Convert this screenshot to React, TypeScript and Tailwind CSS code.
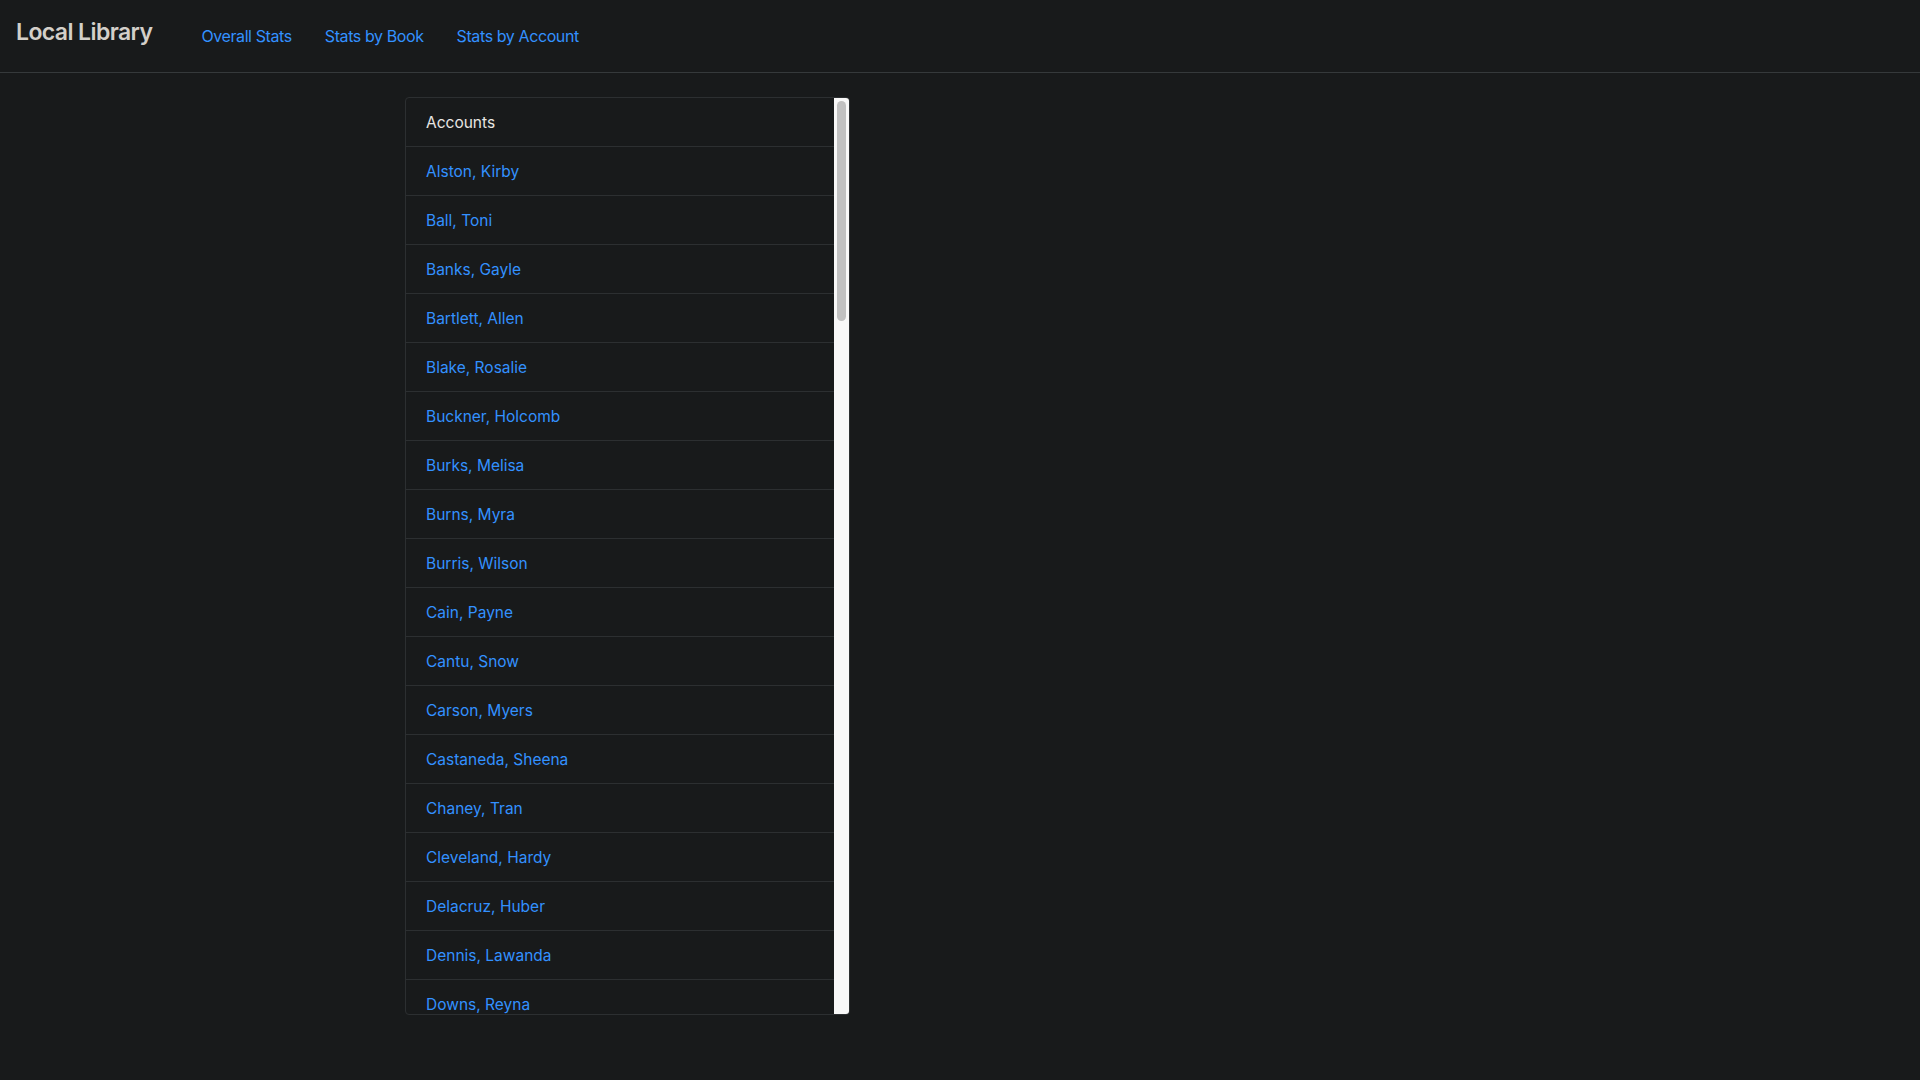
const accounts = [
  "Alston, Kirby",
  "Ball, Toni",
  "Banks, Gayle",
  "Bartlett, Allen",
  "Blake, Rosalie",
  "Buckner, Holcomb",
  "Burks, Melisa",
  "Burns, Myra",
  "Burris, Wilson",
  "Cain, Payne",
  "Cantu, Snow",
  "Carson, Myers",
  "Castaneda, Sheena",
  "Chaney, Tran",
  "Cleveland, Hardy",
  "Delacruz, Huber",
  "Dennis, Lawanda",
  "Downs, Reyna",
];

export default function App() {
  return (
    <div className="min-h-screen bg-[#181a1b] font-['Inter','Liberation_Sans',sans-serif] text-[#e8e6e3]">
      {/* Navbar */}
      <nav className="flex h-[73px] items-center border-b border-[#35393b] px-4">
        <span className="mb-2 mr-[49px] text-[23px] font-semibold tracking-[-0.6px] text-[#d3cfc9]">
          Local Library
        </span>
        <div className="mb-[1px] flex items-center gap-[33px] text-[16px] tracking-[-0.4px] text-[#3391ff]">
          <a href="#">Overall Stats</a>
          <a href="#">Stats by Book</a>
          <a href="#">Stats by Account</a>
        </div>
      </nav>

      {/* Accounts list with scrollbar */}
      <div className="ml-[405px] mt-6 flex h-[918px] w-[445px] overflow-hidden rounded-[4px] border border-[#2c2f31]">
        <div className="flex-1 overflow-hidden">
          <div className="border-b border-[#2c2f31] px-5 pb-[11px] pt-[13px] text-[15.5px] leading-6">
            Accounts
          </div>
          {accounts.map((name) => (
            <div
              key={name}
              className="border-b border-[#2c2f31] px-5 pb-[11px] pt-[13px] text-[15.5px] leading-6"
            >
              <a href="#" className="text-[#3391ff]">
                {name}
              </a>
            </div>
          ))}
        </div>
        <div className="w-[15px] shrink-0 bg-[#f8f8f8] px-[3px] pt-[3px]">
          <div className="h-[220px] rounded-full bg-[#c1c1c1]" />
        </div>
      </div>
    </div>
  );
}
